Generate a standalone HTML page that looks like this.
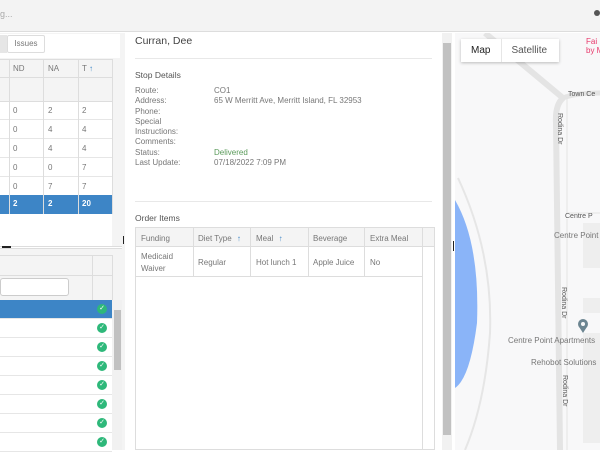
<!DOCTYPE html>
<html><head><style>
*{box-sizing:border-box;margin:0;padding:0}
body{width:600px;height:450px;overflow:hidden;position:relative;font-family:"Liberation Sans",sans-serif;background:#fff;color:#666}
.a{position:absolute;white-space:nowrap}
.t{font-size:8px;color:#777}
</style></head><body>
<div class="a" style="left:0;top:0;width:600px;height:32px;background:#f3f3f3;border-bottom:1px solid #ddd"></div>
<div class="a t" style="left:0;top:9px;color:#aaa;font-size:9px">g...</div>
<div class="a" style="left:594px;top:10px;width:6px;height:6px;border-radius:3px;background:#555"></div>

<div class="a" style="left:0;top:33px;width:125px;height:417px;background:#f4f4f4"></div>
<div class="a" style="left:0;top:34px;width:120px;height:24px;background:#fff"></div>
<div class="a" style="left:0;top:35px;width:7px;height:18px;background:#e6e6e6"></div>
<div class="a t" style="left:7px;top:35px;width:38px;height:18px;border:1px solid #ddd;border-radius:2px;background:#fff;text-align:center;line-height:16px">Issues</div>
<div class="a" style="left:0;top:59px;width:112px;height:42px;background:#f4f4f4;border-top:1px solid #ddd"></div>
<div class="a" style="left:0;top:77px;width:112px;height:1px;background:#ddd"></div>
<div class="a t" style="left:13px;top:64px">ND</div>
<div class="a t" style="left:48px;top:64px">NA</div>
<div class="a t" style="left:82px;top:64px">T <span style="color:#3d85c6">↑</span></div>
<div class="a" style="left:0;top:101px;width:112px;height:146px;background:#fff;border-top:1px solid #ddd"></div>
<div class="a" style="left:112px;top:101px;width:13px;height:146px;background:#f4f4f4"></div>
<div id="rows1"></div>
<div class="a" style="left:0;top:195px;width:112px;height:19px;background:#3d85c6"></div>
<div class="a" style="left:13px;top:199px;font-size:8px;color:#fff;font-weight:bold">2</div>
<div class="a" style="left:48px;top:199px;font-size:8px;color:#fff;font-weight:bold">2</div>
<div class="a" style="left:82px;top:199px;font-size:8px;color:#fff;font-weight:bold">20</div>
<div class="a" style="left:9px;top:59px;width:1px;height:155px;background:#ddd"></div>
<div class="a" style="left:43px;top:59px;width:1px;height:155px;background:#ddd"></div>
<div class="a" style="left:78px;top:59px;width:1px;height:155px;background:#ddd"></div>
<div class="a" style="left:112px;top:59px;width:1px;height:155px;background:#ddd"></div>
<div class="a" style="left:0;top:246px;width:122px;height:3px;border-top:1px solid #ddd;border-bottom:1px solid #ddd;background:#fff"></div>
<div class="a" style="left:2px;top:246px;width:9px;height:2px;background:#222"></div>
<div class="a" style="left:123px;top:236px;width:1px;height:8px;background:#222"></div>
<div class="a" style="left:0;top:255px;width:112px;height:45px;border-top:1px solid #ddd;background:#f4f4f4"></div>
<div class="a" style="left:0;top:275px;width:112px;height:1px;background:#ddd"></div>
<div class="a" style="left:0;top:278px;width:69px;height:18px;border:1px solid #ccc;border-radius:3px;background:#fff"></div>
<div class="a" style="left:92px;top:255px;width:1px;height:195px;background:#ddd"></div>
<div class="a" style="left:112px;top:255px;width:1px;height:195px;background:#ddd"></div>
<div class="a" style="left:0;top:300px;width:112px;height:150px;background:#fff"></div>
<div id="rows2"></div>
<div class="a" style="left:0;top:300px;width:92px;height:18px;background:#3d85c6"></div>
<div class="a" style="left:92px;top:300px;width:20px;height:18px;background:#3d85c6"></div>
<div class="a" style="left:112px;top:300px;width:10px;height:150px;background:#f1f1f1"></div>
<div class="a" style="left:114px;top:310px;width:7px;height:60px;background:#c1c1c1"></div>

<div class="a" style="left:125px;top:33px;width:330px;height:417px;background:#fff"></div>
<div class="a" style="left:135px;top:35px;font-size:10.5px;color:#444">Curran, Dee</div>
<div class="a" style="left:135px;top:58px;width:297px;height:1px;background:#e8e8e8"></div>
<div class="a" style="left:135px;top:70px;font-size:8.5px;color:#555">Stop Details</div>
<div class="a t" style="left:135px;top:86px;line-height:10.3px">Route:<br>Address:<br>Phone:<br>Special<br>Instructions:<br>Comments:<br>Status:<br>Last Update:</div>
<div class="a t" style="left:214px;top:86px;line-height:10.3px">CO1<br>65 W Merritt Ave, Merritt Island, FL 32953<br><br><br><br><br><span style="color:#5a9a5a">Delivered</span><br>07/18/2022 7:09 PM</div>
<div class="a" style="left:135px;top:201px;width:297px;height:1px;background:#e8e8e8"></div>
<div class="a" style="left:135px;top:213px;font-size:8.5px;color:#555">Order Items</div>
<div class="a" style="left:135px;top:227px;width:300px;height:223px;border:1px solid #ddd"></div>
<div class="a" style="left:136px;top:228px;width:298px;height:19px;background:#f4f4f4;border-bottom:1px solid #ddd"></div>
<div class="a" style="left:136px;top:247px;width:286px;height:30px;border-bottom:1px solid #ddd"></div>
<div class="a" style="left:193px;top:228px;width:1px;height:49px;background:#ddd"></div>
<div class="a" style="left:250px;top:228px;width:1px;height:49px;background:#ddd"></div>
<div class="a" style="left:308px;top:228px;width:1px;height:49px;background:#ddd"></div>
<div class="a" style="left:364px;top:228px;width:1px;height:49px;background:#ddd"></div>
<div class="a" style="left:422px;top:228px;width:1px;height:222px;background:#ddd"></div>
<div class="a t" style="left:141px;top:234px">Funding</div>
<div class="a t" style="left:198px;top:234px">Diet Type <span style="color:#3d85c6;margin-left:3px">↑</span></div>
<div class="a t" style="left:256px;top:234px">Meal <span style="color:#3d85c6;margin-left:3px">↑</span></div>
<div class="a t" style="left:313px;top:234px">Beverage</div>
<div class="a t" style="left:370px;top:234px">Extra Meal</div>
<div class="a t" style="left:141px;top:251px;line-height:12px">Medicaid<br>Waiver</div>
<div class="a t" style="left:198px;top:258px">Regular</div>
<div class="a t" style="left:256px;top:258px">Hot lunch 1</div>
<div class="a t" style="left:313px;top:258px">Apple Juice</div>
<div class="a t" style="left:370px;top:258px">No</div>
<div class="a" style="left:442px;top:33px;width:10px;height:417px;background:#f1f1f1"></div>
<div class="a" style="left:443px;top:43px;width:8px;height:392px;background:#c1c1c1"></div>
<div class="a" style="left:453px;top:241px;width:1px;height:10px;background:#222"></div>

<div class="a" style="left:455px;top:33px;width:145px;height:417px;background:#f8f8f9;overflow:hidden">
<svg width="145" height="417" style="position:absolute;left:0;top:0">
<path d="M0 167 Q25 210 22 290 Q15 345 0 355 Z" fill="#8ab4f8"/>
<path d="M3 145 Q38 220 35 300 Q30 370 10 417" stroke="#e6e6e6" stroke-width="2" fill="none"/>
<path d="M30 0 L108 65" stroke="#e4e4e4" stroke-width="6" fill="none"/>
<path d="M108 65 Q100 72 101 90 L105 417" stroke="#e4e4e4" stroke-width="6" fill="none"/>
<path d="M108 65 Q120 60 145 60" stroke="#e4e4e4" stroke-width="5" fill="none"/>
<path d="M112 65 L112 180 L145 180" stroke="#e4e4e4" stroke-width="1" fill="none"/>
<path d="M112 186 L112 417" stroke="#e4e4e4" stroke-width="1" fill="none"/>
<rect x="128" y="190" width="17" height="45" fill="#eee"/>
<rect x="128" y="265" width="17" height="15" fill="#eee"/>
<rect x="128" y="300" width="17" height="110" fill="#eee"/>
<circle cx="128" cy="291" r="5" fill="#6c8591"/>
<path d="M123.5 293 L128 300 L132.5 293 Z" fill="#6c8591"/>
<circle cx="128" cy="291" r="2" fill="#f8f8f9"/>
</svg>
<div class="a" style="left:6px;top:6px;width:98px;height:23px;background:#fff;box-shadow:0 1px 3px rgba(0,0,0,.25);font-size:10px;color:#222;line-height:23px"><span style="margin-left:10px">Map</span><span style="position:absolute;left:40px;top:0;width:1px;height:23px;background:#e6e6e6"></span><span style="margin-left:21px;color:#555">Satellite</span></div>
<div class="a" style="left:131px;top:4px;font-size:8px;color:#e8386b;line-height:9px">Fai<br>by Mar</div>
<div class="a" style="left:113px;top:58px;font-size:7px;color:#555">Town Ce</div>
<div class="a" style="left:110px;top:180px;font-size:7px;color:#555">Centre P</div>
<div class="a" style="left:99px;top:198px;font-size:8px;color:#777">Centre Point</div>
<div class="a" style="left:53px;top:303px;font-size:8px;color:#777">Centre Point Apartments</div>
<div class="a" style="left:76px;top:325px;font-size:8px;color:#777">Rehobot Solutions</div>
<div class="a" style="left:108px;top:80px;font-size:7px;color:#555;transform:rotate(90deg);transform-origin:0 0">Rodina Dr</div>
<div class="a" style="left:112px;top:254px;font-size:7px;color:#555;transform:rotate(90deg);transform-origin:0 0">Rodina Dr</div>
<div class="a" style="left:113px;top:342px;font-size:7px;color:#555;transform:rotate(90deg);transform-origin:0 0">Rodina Dr</div>
</div>
<script>
var r=[["0","2","2"],["0","4","4"],["0","4","4"],["0","0","7"],["0","7","7"]],h="";
r.forEach(function(v,i){var y=101+i*19;h+='<div class="a" style="left:0;top:'+(y+18)+'px;width:112px;height:1px;background:#e6e6e6"></div>';
[13,48,82].forEach(function(x,j){h+='<div class="a t" style="left:'+x+'px;top:'+(y+5)+'px">'+v[j]+'</div>'})});
document.getElementById('rows1').outerHTML=h;h="";
for(var i=0;i<8;i++){var y=300+i*19;h+='<div class="a" style="left:0;top:'+(y+18)+'px;width:112px;height:1px;background:#e6e6e6"></div><div class="a" style="left:97px;top:'+(y+4)+'px;width:10px;height:10px;border-radius:5px;background:#2eb87a;color:#fff;font-size:7px;line-height:10px;text-align:center;z-index:2">✓</div>'}
document.getElementById('rows2').outerHTML=h;
</script>
</body></html>
